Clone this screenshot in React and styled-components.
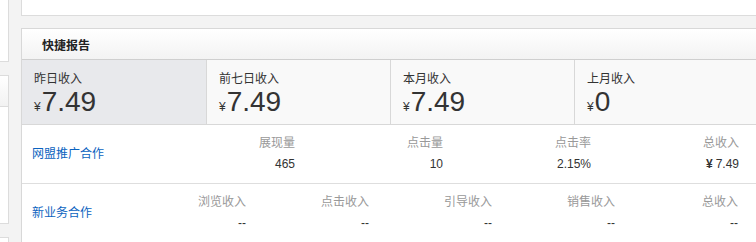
import styled, { createGlobalStyle } from "styled-components";

const GlobalStyle = createGlobalStyle`
  html, body {
    margin: 0;
    padding: 0;
    background: #f3f3f3;
    overflow: hidden;
  }
  body {
    font-family: "Liberation Sans", Arial, "Noto Sans CJK SC", sans-serif;
    font-size: 12px;
    color: #333;
  }
`;

const Page = styled.div`
  display: flex;
  align-items: flex-start;
  gap: 12px;
`;

const Sidebar = styled.div`
  width: 9px;
  flex-shrink: 0;
  display: flex;
  flex-direction: column;
  gap: 13px;
`;

const SideBlock = styled.div`
  height: ${(p) => p.h}px;
  flex-shrink: 0;
  background: #fff;
  border: 1px solid #dcdcdc;
  border-left: none;
  border-top: ${(p) => (p.first ? "none" : "1px solid #dcdcdc")};
  display: flex;
  flex-direction: column;
`;

const SideHead = styled.div`
  height: 30px;
  background: linear-gradient(#fff, #f2f2f2);
  border-bottom: 1px solid #dcdcdc;
`;

const Main = styled.div`
  flex: 1;
  display: flex;
  flex-direction: column;
  gap: 12px;
  min-width: 0;
`;

const TopPanel = styled.div`
  height: 15px;
  flex-shrink: 0;
  background: #fff;
  border-left: 1px solid #dcdcdc;
  border-bottom: 1px solid #dcdcdc;
`;

const Card = styled.div`
  flex-shrink: 0;
  background: #fff;
  border: 1px solid #d8d8d8;
  border-right: none;
  width: 760px;
`;

const CardHead = styled.div`
  height: 30px;
  background: linear-gradient(#fff, #f3f3f3);
  border-bottom: 1px solid #cfcfcf;
  display: flex;
  align-items: center;
  padding-left: 20px;
  font-family: "Noto Sans CJK SC", sans-serif;
  font-weight: bold;
  font-size: 12px;
  color: #222;
`;

const Stats = styled.div`
  display: flex;
  height: 64px;
  background: #f9f9f9;
  border-bottom: 1px solid #d8d8d8;
`;

const StatCell = styled.div`
  width: ${(p) => p.w}px;
  flex-shrink: 0;
  background: ${(p) => (p.active ? "#e8e9ec" : "transparent")};
  border-right: 1px solid #d8d8d8;
  padding: 9px 0 0 12px;
  box-sizing: border-box;
`;

const StatLabel = styled.div`
  font-family: "Noto Sans CJK SC", sans-serif;
  font-size: 12px;
  line-height: 18px;
  color: #333;
`;

const StatValue = styled.div`
  font-size: 28px;
  line-height: 30px;
  color: #333;
`;

const Yen = styled.span`
  font-size: 12px;
  margin-right: 1px;
`;

const Row = styled.div`
  display: grid;
  grid-template-columns: ${(p) => p.cols};
  height: ${(p) => p.h}px;
  border-bottom: 1px solid #dedede;
  align-items: start;
`;

const RowTitle = styled.a`
  padding: 20px 0 0 10px;
  line-height: 16px;
  font-family: "Noto Sans CJK SC", sans-serif;
  font-size: 12px;
  color: #0b63c0;
  text-decoration: none;
`;

const Cell = styled.div`
  text-align: right;
  padding-top: 9px;
`;

const CellHead = styled.div`
  font-family: "Noto Sans CJK SC", sans-serif;
  color: #999;
  font-size: 12px;
  line-height: 16px;
`;

const CellValue = styled.div`
  color: #333;
  font-size: 12px;
  line-height: 16px;
  margin-top: 6px;
`;

const BoldYen = styled.span`
  font-weight: bold;
  margin-right: 3px;
`;

const stats = [
  { label: "昨日收入", value: "7.49", w: 185, active: true },
  { label: "前七日收入", value: "7.49", w: 184 },
  { label: "本月收入", value: "7.49", w: 184 },
  { label: "上月收入", value: "0", w: 200 },
];

const adStats = [
  { head: "展现量", value: "465" },
  { head: "点击量", value: "10" },
  { head: "点击率", value: "2.15%" },
  { head: "总收入", value: "7.49", yen: true },
];

const newStats = ["浏览收入", "点击收入", "引导收入", "销售收入", "总收入"];

export default function App() {
  return (
    <>
      <GlobalStyle />
      <Page>
        <Sidebar>
          <SideBlock first h={61} />
          <SideBlock h={147}>
            <SideHead />
          </SideBlock>
          <SideBlock h={40} />
        </Sidebar>
        <Main>
          <TopPanel />
          <Card>
            <CardHead>快捷报告</CardHead>
            <Stats>
              {stats.map((s) => (
                <StatCell key={s.label} w={s.w} active={s.active}>
                  <StatLabel>{s.label}</StatLabel>
                  <StatValue>
                    <Yen>¥</Yen>
                    {s.value}
                  </StatValue>
                </StatCell>
              ))}
            </Stats>
            <Row h={58} cols="125px repeat(4, 148px)">
              <RowTitle href="#">网盟推广合作</RowTitle>
              {adStats.map((c) => (
                <Cell key={c.head}>
                  <CellHead>{c.head}</CellHead>
                  <CellValue>
                    {c.yen && <BoldYen>¥</BoldYen>}
                    {c.value}
                  </CellValue>
                </Cell>
              ))}
            </Row>
            <Row h={64} cols="101px repeat(5, 123px)">
              <RowTitle href="#">新业务合作</RowTitle>
              {newStats.map((h) => (
                <Cell key={h}>
                  <CellHead>{h}</CellHead>
                  <CellValue>--</CellValue>
                </Cell>
              ))}
            </Row>
          </Card>
        </Main>
      </Page>
    </>
  );
}
